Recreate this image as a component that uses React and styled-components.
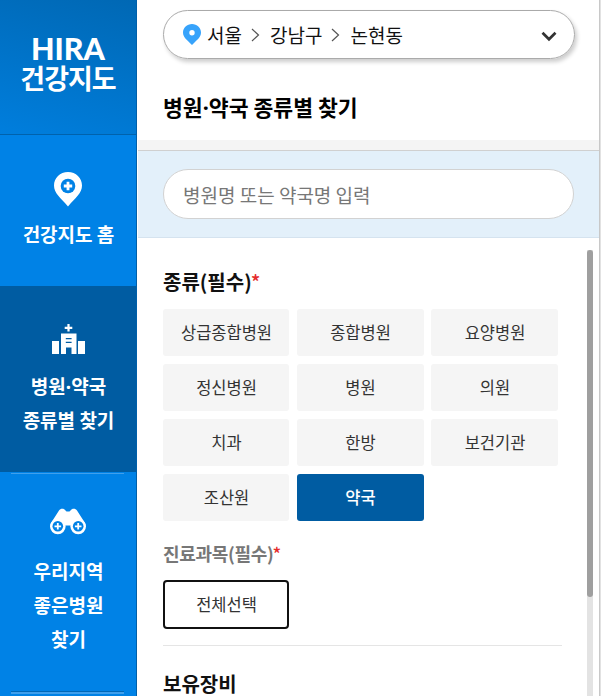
import styled, { createGlobalStyle } from 'styled-components';

const kinds = [
    '상급종합병원', '종합병원', '요양병원',
    '정신병원', '병원', '의원',
    '치과', '한방', '보건기관',
    '조산원', '약국',
];

const PinIcon = () => (
    <svg width="28" height="35" viewBox="0 0 28 35">
        <path fill="#fff" d="M14 0C6 0 0 6 0 13.6 0 21 6.400 26 14 34.500 21.600 26 28 21 28 13.600 28 6 22 0 14 0z" />
        <circle cx="14" cy="14" r="7.300" fill="#0082e6" />
        <path stroke="#fff" strokeWidth="2.800" d="M14 9.800v8.400M9.800 14h8.400" />
    </svg>
);

const HospitalIcon = () => (
    <svg width="33" height="30" viewBox="0 0 33 30">
        <path stroke="#fff" strokeWidth="2.200" d="M16.500 0v7.500M12.700 3.800h7.600" />
        <path fill="#fff" d="M0 17h7v13H0zM26 17h7v13h-7zM9 9.500h15.500V30h-5v-6.500h-5.500V30H9z" />
        <path stroke="#005ca2" strokeWidth="1.300" d="M13.800 14.700h5.800M13.800 18.300h5.800" />
    </svg>
);

const BinocularsIcon = () => (
    <svg width="36" height="27" viewBox="0 0 36 27">
        <path fill="#fff" d="M1 15 9 2.500C10.500 0 14 0 15.500 2.500l1 1h3l1-1C22 0 25.500 0 27 2.500L35 15l-6 6-8-3.500h-6L7 21z" />
        <circle cx="7.800" cy="18.500" r="7.800" fill="#fff" />
        <circle cx="28.200" cy="18.500" r="7.800" fill="#fff" />
        <circle cx="7.800" cy="18.300" r="5.300" fill="#0082e6" />
        <circle cx="28.200" cy="18.300" r="5.300" fill="#0082e6" />
        <path stroke="#fff" strokeWidth="1.800" d="M7.800 15v6.600M4.500 18.300h6.600M28.200 15v6.600M24.900 18.300h6.600" />
    </svg>
);

const Step = () => (
    <StepIcon width="9" height="14" viewBox="0 0 9 14">
        <path fill="none" stroke="#555" strokeWidth="1.200" d="M1 1l6.500 6L1 13" />
    </StepIcon>
);

const App = () => {
    return (
        <>
        <GlobalStyle />
        <Page>
            <Sidebar>
                <Logo>
                    <LogoEn>HIRA</LogoEn>
                    <LogoKo>건강지도</LogoKo>
                </Logo>
                <MenuItem $height={151} $top={37}>
                    <PinIcon />
                    <MenuText $gap={10}>건강지도 홈</MenuText>
                </MenuItem>
                <MenuItem $height={186} $top={38} $active>
                    <HospitalIcon />
                    <MenuText $gap={15}>병원<Dot>·</Dot>약국<br />종류별 찾기</MenuText>
                </MenuItem>
                <MenuItem $height={219} $top={36}>
                    <Line />
                    <BinocularsIcon />
                    <MenuText $gap={19}>우리지역<br />좋은병원<br />찾기</MenuText>
                </MenuItem>
                <BottomLine />
            </Sidebar>
            <Panel>
                <Location>
                    <svg width="18" height="21" viewBox="0 0 18 21">
                        <path fill="#37a3fb" fillRule="evenodd" d="M9 0C4 0 0 3.800 0 8.600 0 13.500 4 16 9 21 14 16 18 13.500 18 8.600 18 3.800 14 0 9 0zM9 6a2.700 2.700 0 1 1 0 5.400A2.700 2.700 0 0 1 9 6z" />
                    </svg>
                    <Place $left={6}>서울</Place>
                    <Step />
                    <Place>강남구</Place>
                    <Step />
                    <Place>논현동</Place>
                    <Arrow width="16" height="11" viewBox="0 0 16 11">
                        <path fill="none" stroke="#333" strokeWidth="2.700" d="M1.500 1.800 8 8.300l6.500-6.500" />
                    </Arrow>
                </Location>
                <Title>병원<Dot>·</Dot>약국 종류별 찾기</Title>
                <SearchBar>
                    <SearchInput placeholder="병원명 또는 약국명 입력" />
                </SearchBar>
                <Body>
                    <Filters>
                        <Heading>종류(필수)<Star>*</Star></Heading>
                        <Grid>
                            {kinds.map((kind) => (
                                <Kind key={kind} $active={kind === '약국'}>{kind}</Kind>
                            ))}
                        </Grid>
                        <SubHeading>진료과목(필수)<Star>*</Star></SubHeading>
                        <SelectAll>전체선택</SelectAll>
                        <Divider />
                        <Heading>보유장비</Heading>
                    </Filters>
                    <Track><Thumb /></Track>
                </Body>
            </Panel>
            <MapEdge />
        </Page>
        </>
    )
}

const GlobalStyle = createGlobalStyle`
*{
    box-sizing:border-box;
}
body{
    margin:0;
    background:#fff;
    overflow:hidden;
    font-family:"Noto Sans CJK KR", "Noto Sans", sans-serif;
}
button, input{
    font-family:inherit;
}
`

const Page = styled.div`
display:flex;
width:601px;
height:696px;
overflow:hidden;
`

const Sidebar = styled.nav`
display:flex;
flex-direction:column;
flex:none;
width:137px;
border-right:1px solid #005fa9;
background:#0082e6;
color:#fff;
`

const Logo = styled.div`
display:flex;
flex-direction:column;
align-items:center;
flex:none;
height:135px;
padding-top:32px;
border-bottom:1px solid #0062ac;
background:linear-gradient(15deg, #007edd, #0068b4);
`

const LogoEn = styled.div`
font-family:Lato, sans-serif;
font-size:30.5px;
font-weight:900;
line-height:32px;
`

const LogoKo = styled.div`
font-size:27px;
font-weight:700;
letter-spacing:-1px;
line-height:28px;
`

const MenuItem = styled.div`
display:flex;
flex-direction:column;
align-items:center;
flex:none;
position:relative;
height:${(p) => p.$height}px;
padding-top:${(p) => p.$top}px;
background:${(p) => (p.$active ? '#005ca2' : '#0082e6')};

svg{
    flex:none;
}
`

const MenuText = styled.div`
margin-top:${(p) => p.$gap}px;
padding-left:1px;
font-size:19px;
font-weight:700;
line-height:34px;
text-align:center;
`

const Dot = styled.span`
font-family:"Noto Sans", sans-serif;
line-height:1;
`

const Line = styled.div`
position:absolute;
top:1px;
left:11px;
width:113px;
height:1px;
background:#3f9fec;
`

const BottomLine = styled.div`
flex:none;
width:113px;
height:3px;
margin-left:11px;
border-top:1px solid #0068b8;
background:#3f9fec;
`

const Panel = styled.main`
display:flex;
flex-direction:column;
flex:none;
width:463px;
padding-left:1px;
border-right:1px solid #c8c8c8;
`

const Location = styled.div`
display:flex;
align-items:center;
flex:none;
width:412px;
height:49px;
margin:10px 0 0 25px;
padding:0 17px 0 19px;
border:1px solid #aaa;
border-radius:25px;
box-shadow:2px 3px 4px rgba(0, 0, 0, 0.2);
`

const Place = styled.span`
margin-left:${(p) => p.$left || 0}px;
font-size:19px;
line-height:28px;
color:#111;
`

const StepIcon = styled.svg`
margin:0 10px 0 9px;
`

const Arrow = styled.svg`
margin:3px 0 0 auto;
`

const Title = styled.h1`
flex:none;
height:81px;
margin:0;
padding:31px 0 0 25px;
font-size:21.6px;
font-weight:700;
line-height:34px;
color:#000;
`

const SearchBar = styled.div`
flex:none;
height:98px;
padding:18px 25px 0;
border-top:10px solid #f4f4f4;
border-bottom:1px solid #d5e3ef;
background:#e3f0fa;
box-shadow:inset 0 1px 0 #d0d0d0;
`

const SearchInput = styled.input`
display:block;
width:411px;
height:50px;
margin-top:1px;
padding:0 19px;
border:1px solid #d2d2d2;
border-radius:25px;
outline:none;
font-size:19px;
color:#333;

&::placeholder{
    color:#777;
    opacity:1;
}
`

const Body = styled.div`
display:flex;
justify-content:space-between;
flex:1;
min-height:0;
padding:12px 6px 0 25px;
`

const Filters = styled.section`
width:399px;
`

const Heading = styled.h2`
margin:0;
padding-top:16px;
font-size:20px;
font-weight:700;
line-height:32px;
color:#111;
`

const SubHeading = styled.h3`
margin:16px 0 10px;
font-size:18px;
font-weight:700;
letter-spacing:-0.3px;
line-height:33px;
color:#777;
`

const Star = styled.span`
margin-left:-1px;
font-weight:500;
color:#e52b2b;
`

const Grid = styled.div`
display:grid;
grid-template-columns:126px 127px 127px;
grid-auto-rows:47px;
column-gap:7.5px;
row-gap:8px;
margin-top:11px;
`

const Kind = styled.button`
padding:0 0 1px 1px;
border:0;
border-radius:3px;
font-size:16.5px;
font-weight:${(p) => (p.$active ? 500 : 400)};
background:${(p) => (p.$active ? '#005ca2' : '#f5f5f5')};
color:${(p) => (p.$active ? '#fff' : '#333')};
`

const SelectAll = styled.button`
display:block;
width:126px;
height:49px;
padding:0 0 1px 1px;
border:2px solid #111;
border-radius:4px;
font-size:16.5px;
background:#fff;
color:#333;
`

const Divider = styled.div`
height:1px;
margin:16px 0 6px;
background:#e5e5e5;
`

const Track = styled.div`
width:6px;
background:#e3e3e3;
`

const Thumb = styled.div`
height:347px;
border-radius:3px;
background:#9f9f9f;
`

const MapEdge = styled.div`
flex:1;
background:#e2e2e2;
`
export default App;
